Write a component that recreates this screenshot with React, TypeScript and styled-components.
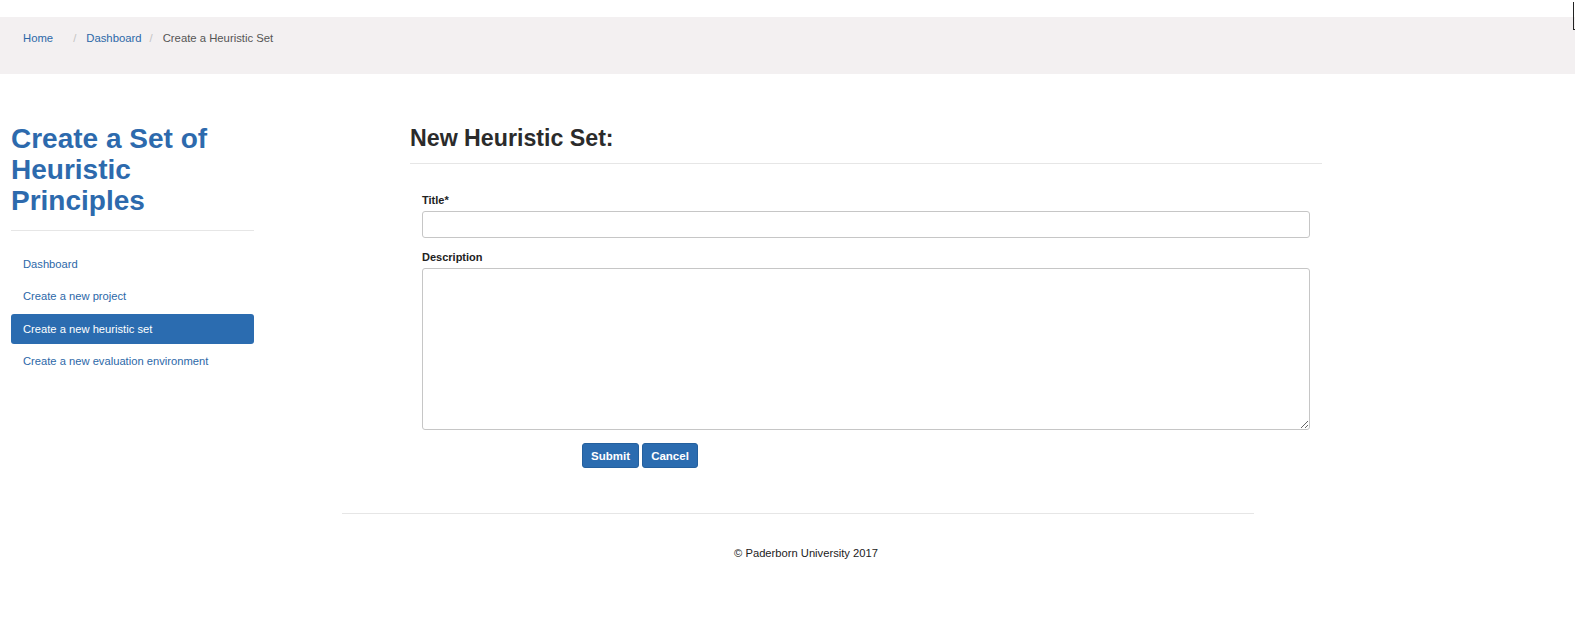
import React from "react";
import styled, { createGlobalStyle } from "styled-components";

const GlobalStyle = createGlobalStyle`
  html, body { margin: 0; padding: 0; background: #fff; }
  body { font-family: "Liberation Sans", Arial, sans-serif; color: #333; }
  * { box-sizing: border-box; }
`;

const Page = styled.div`
  position: relative;
  width: 100%;
  min-height: 633px;
  padding-top: 17px;
`;

const CornerMark = styled.div`
  position: absolute;
  top: 2px;
  right: 0;
  width: 2px;
  height: 28px;
  border-left: 1px solid #222;
  border-bottom: 1px solid #222;
`;

const BreadcrumbBar = styled.nav`
  height: 57px;
  background: #f3f0f1;
  padding: 13px 0 0 23px;
  display: flex;
  align-items: flex-start;
  font-size: 11.3px;
  line-height: 17px;
`;

const Crumb = styled.a<{ $active?: boolean }>`
  color: ${(p) => (p.$active ? "#555" : "#2c68a8")};
  text-decoration: none;
`;

const Sep = styled.span<{ $wide?: boolean }>`
  color: #c4c4c4;
  padding: ${(p) => (p.$wide ? "0 10px 0 20px" : "0 10px 0 8px")};
`;

const Row = styled.div`
  display: flex;
  align-items: flex-start;
  padding-top: 49px;
`;

const Sidebar = styled.aside`
  width: 243px;
  margin-left: 11px;
`;

const SideTitle = styled.h1`
  margin: 0;
  font-size: 28px;
  line-height: 31px;
  font-weight: 700;
  color: #2d6aad;
`;

const Rule = styled.hr<{ $mt: number; $mb: number }>`
  border: 0;
  border-top: 1px solid #e6e6e6;
  margin: ${(p) => p.$mt}px 0 ${(p) => p.$mb}px;
`;

const NavList = styled.ul`
  list-style: none;
  margin: 0;
  padding: 0;
  display: flex;
  flex-direction: column;
  gap: 3px;
`;

const NavItem = styled.li<{ $active?: boolean }>`
  height: 29.5px;
  display: flex;
  align-items: center;
  padding-left: 12px;
  font-size: 11.2px;
  border-radius: 3px;
  background: ${(p) => (p.$active ? "#2b6cb0" : "transparent")};
  color: ${(p) => (p.$active ? "#fff" : "#2c68a8")};
`;

const Main = styled.main`
  width: 912px;
  margin-left: 156px;
  padding-top: 1px;
`;

const MainTitle = styled.h2`
  margin: 0;
  font-size: 23.2px;
  line-height: 28px;
  font-weight: 700;
  color: #2b2b2b;
`;

const Form = styled.form`
  padding: 0 12px;
  display: flex;
  flex-direction: column;
`;

const Label = styled.label<{ $mt?: number }>`
  display: block;
  font-size: 11px;
  line-height: 14px;
  font-weight: 700;
  color: #222;
  margin-top: ${(p) => p.$mt ?? 0}px;
  margin-bottom: 4px;
`;

const TextInput = styled.input`
  width: 100%;
  height: 27px;
  border: 1px solid #c6c6c6;
  border-radius: 3px;
  background: #fff;
  font-family: inherit;
  font-size: 12px;
  padding: 4px 8px;
  outline: none;
`;

const TextArea = styled.textarea`
  width: 100%;
  height: 162px;
  border: 1px solid #c6c6c6;
  border-radius: 3px;
  background: #fff;
  font-family: inherit;
  font-size: 12px;
  padding: 4px 8px;
  outline: none;
  resize: vertical;
  display: block;
`;

const Buttons = styled.div`
  display: flex;
  gap: 3px;
  margin-top: 13px;
  padding-left: 160px;
`;

const Button = styled.button<{ $w: number }>`
  width: ${(p) => p.$w}px;
  height: 25px;
  background: #2b6cb0;
  border: 1px solid #24609e;
  border-radius: 3px;
  color: #fff;
  font-family: inherit;
  font-size: 11.5px;
  font-weight: 700;
  padding: 0;
  cursor: pointer;
`;

const Footer = styled.footer`
  width: 912px;
  margin: 45px 0 0 342px;
  border-top: 1px solid #e6e6e6;
  padding: 32px 0 0 16px;
  text-align: center;
  font-size: 11.2px;
  line-height: 14px;
  color: #222;
`;

export default function App() {
  return (
    <>
      <GlobalStyle />
      <Page>
        <CornerMark />
        <BreadcrumbBar>
          <Crumb href="#">Home</Crumb>
          <Sep $wide>/</Sep>
          <Crumb href="#">Dashboard</Crumb>
          <Sep>/</Sep>
          <Crumb $active>Create a Heuristic Set</Crumb>
        </BreadcrumbBar>
        <Row>
          <Sidebar>
            <SideTitle>Create a Set of Heuristic Principles</SideTitle>
            <Rule $mt={14} $mb={18} />
            <NavList>
              <NavItem>Dashboard</NavItem>
              <NavItem>Create a new project</NavItem>
              <NavItem $active>Create a new heuristic set</NavItem>
              <NavItem>Create a new evaluation environment</NavItem>
            </NavList>
          </Sidebar>
          <Main>
            <MainTitle>New Heuristic Set:</MainTitle>
            <Rule $mt={11} $mb={29} />
            <Form onSubmit={(e) => e.preventDefault()}>
              <Label htmlFor="title">Title*</Label>
              <TextInput id="title" type="text" />
              <Label htmlFor="desc" $mt={12}>Description</Label>
              <TextArea id="desc" />
              <Buttons>
                <Button type="submit" $w={57}>Submit</Button>
                <Button type="button" $w={56}>Cancel</Button>
              </Buttons>
            </Form>
          </Main>
        </Row>
        <Footer>© Paderborn University 2017</Footer>
      </Page>
    </>
  );
}
